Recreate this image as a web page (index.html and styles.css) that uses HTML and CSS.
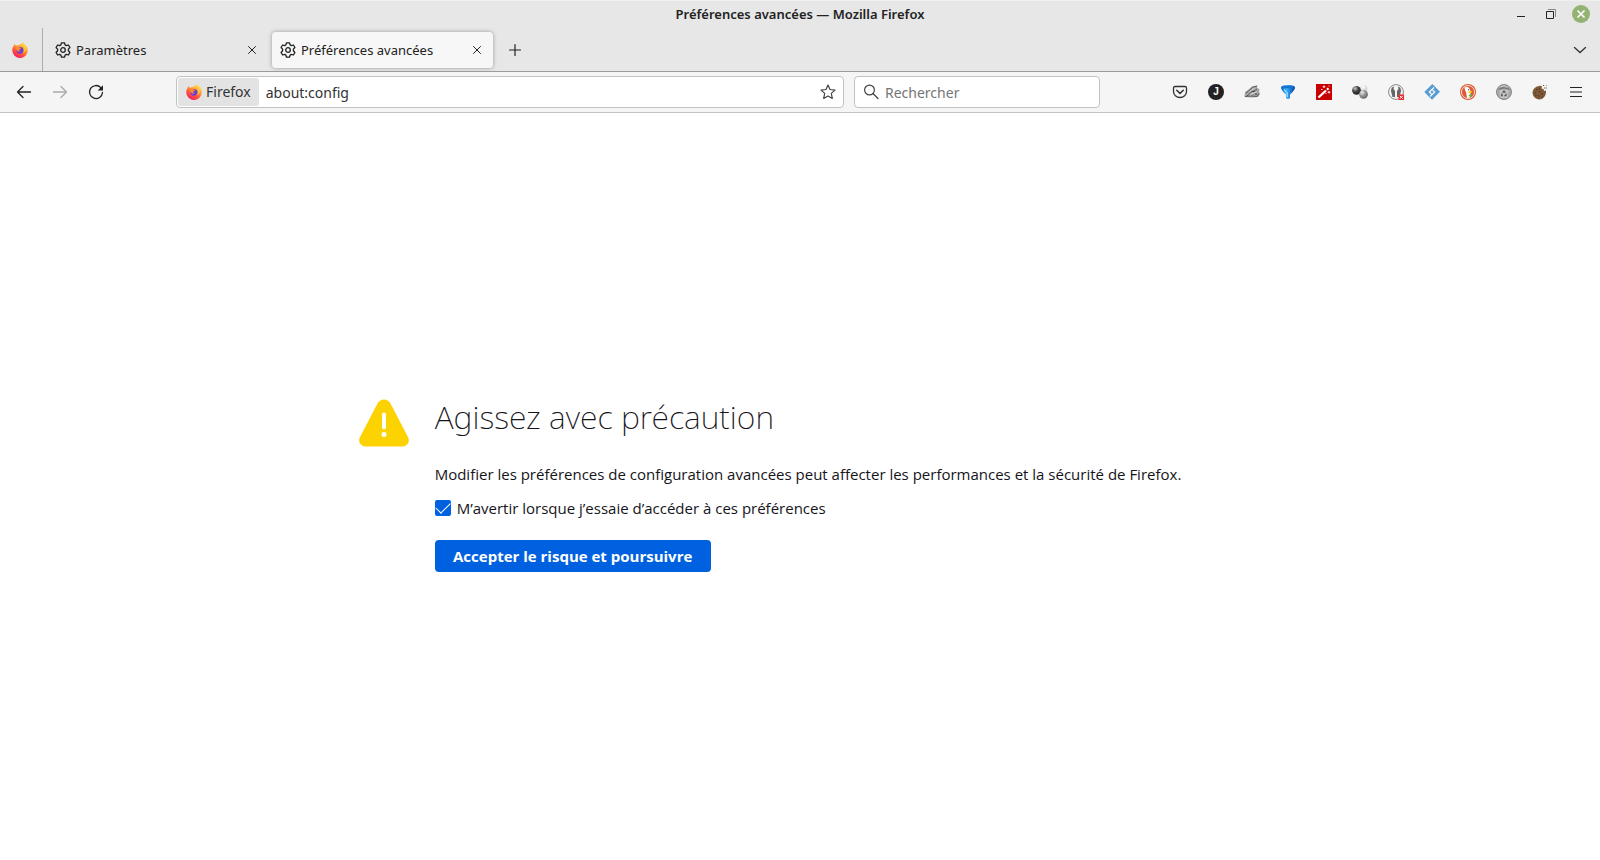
FILE: index.html
```html
<!DOCTYPE html>
<html lang="fr">
<head>
<meta charset="utf-8">
<title>Préférences avancées</title>
<link rel="stylesheet" href="styles.css">
</head>
<body>
<svg class="defs" aria-hidden="true">
  <defs>
    <linearGradient id="flame" x1="0.85" y1="0.05" x2="0.3" y2="1">
      <stop offset="0" stop-color="#fff44f"/><stop offset=".35" stop-color="#ffa436"/><stop offset=".65" stop-color="#ff5a36"/><stop offset="1" stop-color="#f5156c"/>
    </linearGradient>
    <linearGradient id="funnel" x1="0" y1="0" x2="1" y2="0">
      <stop offset="0" stop-color="#0a5fc0"/><stop offset=".4" stop-color="#3ab0ff"/><stop offset="1" stop-color="#003f9e"/>
    </linearGradient>
    <radialGradient id="darkball" cx=".35" cy=".3" r=".7"><stop offset="0" stop-color="#ccc"/><stop offset=".5" stop-color="#444"/><stop offset="1" stop-color="#222"/></radialGradient>
    <radialGradient id="greyball" cx=".35" cy=".3" r=".7"><stop offset="0" stop-color="#eee"/><stop offset=".5" stop-color="#999"/><stop offset="1" stop-color="#666"/></radialGradient>
    <radialGradient id="whiteball" cx=".35" cy=".3" r=".7"><stop offset="0" stop-color="#fff"/><stop offset="1" stop-color="#ccc"/></radialGradient>
    <symbol id="firefox" viewBox="0 0 16 16">
      <path fill="url(#flame)" d="M1.700 3.800 2.200 2l1.700 1.800C4.500 3.400 5.500 3 6.500 3.200 7.500 2 8.800 1.900 9.600 2.200L10.500 0c.7 1.300 1.600 1.900 2.500 2.800l.4-.4C14.800 4 15.900 6 15.800 8.500a7.700 7.500 0 0 1-15.500 0C.2 6.700.7 5.100 1.700 3.800z"/>
      <circle cx="8" cy="8.300" r="3.400" fill="#6a3fd8"/>
      <path fill="#ff8a2b" d="M3.500 4.500C5 4 6.500 4.500 7.500 5.500c1 .2 1.500.4 1.500.9-.4.800-1.300.8-1.900 1 .2 1.200 1 1.500 1.900 1.500-1 .8-3.300.6-4-.5C4 7 3.800 5.500 3.500 4.500z"/>
      <path fill="#ffcf3c" d="M10 2.200c1.700 1.100 2.700 3.200 2.500 5.300-.3 1.600-1 2.700-2 3.300 3-.3 4-3.500 2.900-6.200L10.500 0z"/>
    </symbol>
    <symbol id="gear" viewBox="0 0 16 16">
      <path fill="none" stroke="currentColor" stroke-width="1.300" stroke-linejoin="round" d="M6.500.8h3l.6 2.100 1.200.7 2.100-.6 1.500 2.500-1.500 1.600v1.700l1.500 1.700-1.500 2.500-2.100-.6-1.200.7-.6 2.100h-3l-.6-2.100-1.200-.7-2.100.6-1.500-2.500 1.500-1.700V7.100L1.100 5.500 2.600 3l2.100.6 1.200-.7z"/>
      <circle cx="8" cy="8" r="2.300" fill="none" stroke="currentColor" stroke-width="1.300"/>
    </symbol>
    <symbol id="cross" viewBox="0 0 16 16"><path fill="none" stroke="currentColor" stroke-width="1" stroke-linecap="round" d="m4.500 4.500 7 7m0-7-7 7"/></symbol>
  </defs>
</svg>

<header class="browser">
  <div class="titlebar">
    <div class="window-title">Préférences avancées — Mozilla Firefox</div>
    <div class="window-controls">
      <button class="win" aria-label="Réduire"><svg viewBox="0 0 18 18"><path d="M5 11.500h8" stroke="#222"/></svg></button>
      <button class="win" aria-label="Restaurer"><svg viewBox="0 0 18 18" fill="none"><path d="M6 4.500h7.500V12" stroke="#888"/><path d="M4.500 6.500h7v7h-7z" stroke="#222"/></svg></button>
      <button class="win win-close" aria-label="Fermer la fenêtre"><svg viewBox="0 0 18 18"><path d="m5.500 5.500 7 7m0-7-7 7" stroke="#fff" stroke-width="1.700"/></svg></button>
    </div>
  </div>

  <nav class="tabs" aria-label="Onglets">
    <button class="pinned" aria-label="Firefox"><svg class="icon"><use href="#firefox"/></svg></button>
    <div class="tab">
      <svg class="icon"><use href="#gear"/></svg><span class="tab-label">Paramètres</span>
      <button class="tab-close" aria-label="Fermer l’onglet Paramètres"><svg class="icon"><use href="#cross"/></svg></button>
    </div>
    <div class="tab tab-active">
      <svg class="icon"><use href="#gear"/></svg><span class="tab-label">Préférences avancées</span>
      <button class="tab-close" aria-label="Fermer l’onglet Préférences avancées"><svg class="icon"><use href="#cross"/></svg></button>
    </div>
    <button class="tool" aria-label="Nouvel onglet"><svg class="icon" viewBox="0 0 16 16"><path d="M8 2.500v11M2.500 8h11" stroke="#222" stroke-width="1.200" stroke-linecap="round"/></svg></button>
    <button class="tool list-tabs" aria-label="Lister les onglets"><svg class="icon" viewBox="0 0 16 16"><path d="m2.500 5.500 5.500 5 5.500-5" fill="none" stroke="#333" stroke-width="1.300" stroke-linecap="round"/></svg></button>
  </nav>

  <div class="toolbar">
    <div class="tools nav-tools">
      <button class="tool" aria-label="Précédent"><svg class="icon" viewBox="0 0 16 16"><path d="M14.500 8h-13M7 2.500 1.500 8 7 13.500" fill="none" stroke="#222" stroke-width="1.300" stroke-linecap="round" stroke-linejoin="round"/></svg></button>
      <button class="tool" aria-label="Suivant" disabled><svg class="icon" viewBox="0 0 16 16"><path d="M1.500 8h13M9 2.500 14.500 8 9 13.500" fill="none" stroke="#aaa" stroke-width="1.300" stroke-linecap="round" stroke-linejoin="round"/></svg></button>
      <button class="tool" aria-label="Actualiser"><svg class="icon" viewBox="0 0 16 16"><path d="M12.800 3.600A6.500 6.500 0 1 0 14.500 8.500" fill="none" stroke="#222" stroke-width="1.300" stroke-linecap="round"/><path d="M15 1.200v5.300H9.700z" fill="#222"/></svg></button>
    </div>
    <div class="field urlbar">
      <button class="identity"><svg class="icon"><use href="#firefox"/></svg>Firefox</button>
      <input class="url" type="text" value="about:config" aria-label="Adresse">
      <button class="star" aria-label="Marquer cette page"><svg class="icon" viewBox="0 0 16 16"><path d="m8 1 2 4.500 5 .6-3.700 3.300 1 5L8 12l-4.300 2.400 1-5L1 6.100l5-.6z" fill="none" stroke="#444" stroke-width="1.200" stroke-linejoin="round"/></svg></button>
    </div>
    <label class="field search">
      <svg class="icon" viewBox="0 0 16 16"><circle cx="6.500" cy="6" r="4.900" fill="none" stroke="#444" stroke-width="1.200"/><path d="m10.200 9.700 4.800 4.800" stroke="#444" stroke-width="1.300" stroke-linecap="round"/></svg>
      <input type="search" placeholder="Rechercher" aria-label="Rechercher">
    </label>
    <div class="tools extensions">
      <button class="tool" aria-label="Pocket"><svg class="icon" viewBox="0 0 16 16"><path d="M3 2.500h10c1 0 1.500.5 1.500 1.500v3.500a6.500 6 0 0 1-13 0V4c0-1 .5-1.500 1.500-1.500z" fill="none" stroke="#333" stroke-width="1.300"/><path d="M4.700 6.300 8 9.400l3.300-3.100" fill="none" stroke="#333" stroke-width="1.500" stroke-linecap="round" stroke-linejoin="round"/></svg></button>
      <button class="tool" aria-label="Extension J"><span class="badge-j">J</span></button>
      <button class="tool" aria-label="Extension"><svg class="icon" viewBox="0 0 16 16"><path d="m.5 13 .5-5L4 6l4-3.500 5.500-1L13 4l2.500 1-.5 3 1 2-2 3-6 .5z" fill="#a4a4a4"/><path d="m2 9 3-2.500 4-3.500 4-1M3 12l4-4 3-1 3-2M1 12.500l6-.5 6 .5 2-3" fill="none" stroke="#555" stroke-width=".9"/><path d="m5 8.500 3-3 3-1M6 11l3-2 4-1" fill="none" stroke="#ddd" stroke-width=".9"/><path d="M8.500 7.500h2M11 10h2" stroke="#333"/></svg></button>
      <button class="tool" aria-label="Filtre"><svg class="icon" viewBox="0 0 16 16"><path d="M1 3.500Q1 6 6 10.500V14q2 2 4 0v-3.500q5-4.500 5-7Q15 1 8 1T1 3.500z" fill="url(#funnel)"/><ellipse cx="8" cy="3" rx="5.500" ry="1.300" fill="#1474cf"/><path d="m4 5.500 3.300 3.800V13" fill="none" stroke="#9bdcff" stroke-width="1.300"/></svg></button>
      <button class="tool" aria-label="Baguette"><svg class="icon" viewBox="0 0 16 16"><path d="M0 0h16v16H0z" fill="#c80000"/><path d="m2.500 13.500 7.500-7" stroke="#fff" stroke-width="2.200"/><path d="m11 5.700 1.500-1.400" stroke="#fff" stroke-width="2.200"/><path d="M8 1.500v2.500M6.700 2.700h2.600M13 7v2.500m-1.300-1.200h2.600M13 1.500v1M5 5.500h1.500M9.500 9.500h1" stroke="#fff" stroke-width=".9"/></svg></button>
      <button class="tool" aria-label="Molécule"><svg class="icon" viewBox="0 0 16 16"><circle cx="12" cy="4.300" r="3.400" fill="url(#whiteball)"/><circle cx="4.500" cy="6.300" r="4.400" fill="url(#darkball)"/><circle cx="11.500" cy="10.300" r="4.400" fill="url(#greyball)"/></svg></button>
      <button class="tool" aria-label="Scripts bloqués"><svg class="icon" viewBox="0 0 16 16"><circle cx="8" cy="8" r="7.400" fill="#f4f4f4" stroke="#888"/><path d="M3 7q0-4 3-4.500L5.500 5 7 7v6H4.500z" fill="#666"/><path d="M13 7q0-4-3-4.500L10.500 5 9 7v6h2.500z" fill="#666"/><path d="M10.500 10.500H16V16h-5.500z" fill="#e22"/><path d="m11.800 11.800 3 3m0-3-3 3" stroke="#fff"/></svg></button>
      <button class="tool" aria-label="Losange"><svg class="icon" viewBox="0 0 16 16"><path d="M8.300 0 16 7.700 8 15.700.300 8z" fill="#569bd2"/><path d="M10 3.500 5.300 8l2.200 2M6 12.500 10.700 8 8.500 6" fill="none" stroke="#f5f5f5" stroke-width="1.300"/></svg></button>
      <button class="tool" aria-label="DuckDuckGo"><svg class="icon" viewBox="0 0 16 16"><circle cx="8" cy="8" r="8" fill="#de5833"/><circle cx="8" cy="8" r="6.500" fill="none" stroke="#fff" stroke-width=".8"/><path d="M4.500 3.500Q7 2 9 4q1.500 1.500 1.500 4l-.5 5.500-3 .5-1-6Q4.500 5.500 4.500 3.500z" fill="#fff"/><path d="M8.500 7.500q2-1 4-.3-.5 1.800-4 1.800z" fill="#fdd20a"/><path d="m8.500 11 3.500-.7v2.700l-2.500-.5z" fill="#5cb53e"/><circle cx="8.500" cy="5.700" r=".6" fill="#2d4f8e"/></svg></button>
      <button class="tool" aria-label="Nettoyage"><svg class="icon" viewBox="0 0 16 16"><circle cx="8" cy="8" r="7.500" fill="#aaa" stroke="#858585"/><path d="M3.500 6h9L11.500 14h-7z" fill="#c5c5c5"/><path d="M2.500 5.500Q8 2 13.500 5.500" fill="none" stroke="#777" stroke-width="1.300"/><path d="m6.700 8.700 1.300-1.500 1.300 1.500m1 1-.5 2H8.300m-1.500 0H5.700l.3-2" fill="none" stroke="#444" stroke-width="1.100"/><path d="m5 2 1 1m2-2v1.500m3 0-1 1" stroke="#eee"/></svg></button>
      <button class="tool" aria-label="Cookies"><svg class="icon" viewBox="0 0 16 16"><path d="M7 2q2-.5 3 .5l-.5 2 2 .5.5 2 2-.5q.5 3-1 5.500Q10.500 15.500 7 15.500A6.800 6.800 0 0 1 .5 8.500Q1 3 7 2z" fill="#7e5937"/><path d="M4 5.500h1.500M7 4.500h1M3 9h1m3-1.500h1.500M6 12h1.500m2-2H11m-1 3h1M3.500 11.500h1" stroke="#4b3018" stroke-width="1.100"/><path d="M11 1.500h1.200M13.500 4h1.200M12 4h.8M14 1.500h.6" stroke="#6b4525"/></svg></button>
      <button class="tool" aria-label="Menu"><svg class="icon" viewBox="0 0 16 16"><path d="M2.500 3.500h11M2.500 8h11M2.500 12.500h11" stroke="#222" stroke-width="1.200" stroke-linecap="round"/></svg></button>
    </div>
  </div>
</header>

<main class="page">
  <svg class="warning" viewBox="0 0 50 48" aria-hidden="true"><path d="M18.500 4.500Q21 .500 25 .500t6.500 4l17.500 33.500q2 4-.5 7-2 2.500-5 2.500H6.500q-3 0-5-2.500-2.500-3-.5-7z" fill="#fdd201"/><path d="M25 15.500v13" stroke="#fff" stroke-width="4" stroke-linecap="round"/><circle cx="25" cy="35.500" r="2.500" fill="#fff"/></svg>
  <div class="notice">
    <h1>Agissez avec précaution</h1>
    <p>Modifier les préférences de configuration avancées peut affecter les performances et la sécurité de Firefox.</p>
    <label class="check"><input type="checkbox" checked>M’avertir lorsque j’essaie d’accéder à ces préférences</label>
    <button class="accept">Accepter le risque et poursuivre</button>
  </div>
</main>
</body>
</html>
```
FILE: styles.css
```css
* { box-sizing: border-box; }

body {
  margin: 0;
  min-height: 100vh;
  display: flex;
  flex-direction: column;
  background: #fff;
  color: #15141a;
  font: 15px/22px "Noto Sans", "Open Sans", sans-serif;
}

button, input {
  font: inherit;
  color: inherit;
}

button {
  padding: 0;
  border: 0;
  background: none;
}

svg { display: block; }

.defs {
  position: absolute;
  width: 0;
  height: 0;
}

.icon {
  width: 16px;
  height: 16px;
  flex: none;
}

.browser { background: #e7e7e7; }

.titlebar {
  display: grid;
  grid-template-columns: 1fr auto 1fr;
  align-items: center;
  height: 28px;
  padding: 0 10px 1px;
  border-top: 1px solid #f0f0f0;
}

.window-title {
  grid-column: 2;
  font-size: 13px;
  line-height: 18px;
  font-weight: 600;
  color: #222;
}

.window-controls {
  display: flex;
  justify-content: flex-end;
  gap: 12px;
}

.win {
  width: 18px;
  height: 18px;
  border-radius: 50%;
}

.win svg { width: 18px; height: 18px; }

.win-close { background: #92b372; }

.tabs {
  display: flex;
  align-items: center;
  height: 44px;
  border-bottom: 1px solid #9b9b9b;
  font-size: 13px;
  line-height: 18px;
  color: #222;
}

.pinned {
  align-self: stretch;
  width: 43px;
  padding-left: 12px;
  border-right: 1px solid #adadad;
}

.tab {
  display: flex;
  align-items: center;
  gap: 5px;
  width: 221px;
  height: 36px;
  margin-right: 4px;
  padding: 0 8px;
  border-radius: 4px;
}

.pinned + .tab {
  width: 225px;
  padding-left: 12px;
}

.tab-active {
  background: #f7f7f7;
  box-shadow: 0 0 4px #999;
}

.tab-label { flex: 1; }

.tool {
  display: grid;
  place-items: center;
  width: 36px;
  height: 36px;
  flex: none;
}

.list-tabs {
  margin-left: auto;
  margin-right: 2px;
}

.toolbar {
  display: flex;
  align-items: center;
  height: 41px;
  padding: 0 6px;
  background: #f5f5f5;
  border-bottom: 1px solid #c4c4c4;
  font-size: 14px;
  line-height: 20px;
}

.tools { display: flex; }

.nav-tools { margin-right: 62px; }

.field {
  display: flex;
  align-items: center;
  height: 32px;
  border: 1px solid #c2c2c2;
  border-radius: 4px;
  background: #fff;
  color: #333;
}

.field input {
  flex: 1;
  min-width: 0;
  padding: 1px 0 0;
  border: 0;
  outline: 0;
  background: none;
}

.urlbar {
  flex: 1;
  padding: 1px;
}

.identity {
  display: flex;
  align-items: center;
  gap: 4px;
  height: 28px;
  padding: 0 8px;
  margin-right: 7px;
  border-radius: 3px;
  background: #e3e3e3;
}

.star { padding: 6px; }

.search {
  width: 246px;
  gap: 6px;
  margin-left: 10px;
  padding: 0 8px;
}

.search input::placeholder {
  color: #757575;
  opacity: 1;
}

.extensions { margin-left: 62px; }

.badge-j {
  width: 16px;
  height: 16px;
  border-radius: 50%;
  background: #222;
  color: #fff;
  font: bold 10px/16px "Liberation Sans", sans-serif;
}

.page {
  flex: 1;
  display: grid;
  grid-template-columns: 50px auto;
  column-gap: 26px;
  justify-content: center;
  align-content: center;
  padding: 0 60px 3px 0;
  font-family: "Open Sans", "Noto Sans", sans-serif;
}

.warning {
  width: 50px;
  height: 48px;
}

h1 {
  margin: 0 0 28px;
  font-family: "Noto Sans", "Open Sans", sans-serif;
  font-size: 32px;
  line-height: 36px;
  font-weight: 200;
}

p { margin: 0 0 12px; }

.check {
  display: flex;
  align-items: center;
  gap: 6px;
  margin-bottom: 21px;
}

.check input {
  appearance: none;
  width: 16px;
  height: 16px;
  margin: 0;
  border-radius: 2px;
  background: #0061e0;
  display: grid;
  place-items: center;
}

.check input:checked::before {
  content: "";
  width: 13px;
  height: 7px;
  margin-bottom: 3px;
  border: solid #fff;
  border-width: 0 0 1px 1px;
  transform: rotate(-45deg);
}

.accept {
  min-width: 276px;
  height: 32px;
  padding: 0 16px;
  border-radius: 4px;
  background: #0061e0;
  color: #fff;
  font-weight: 700;
}
```
